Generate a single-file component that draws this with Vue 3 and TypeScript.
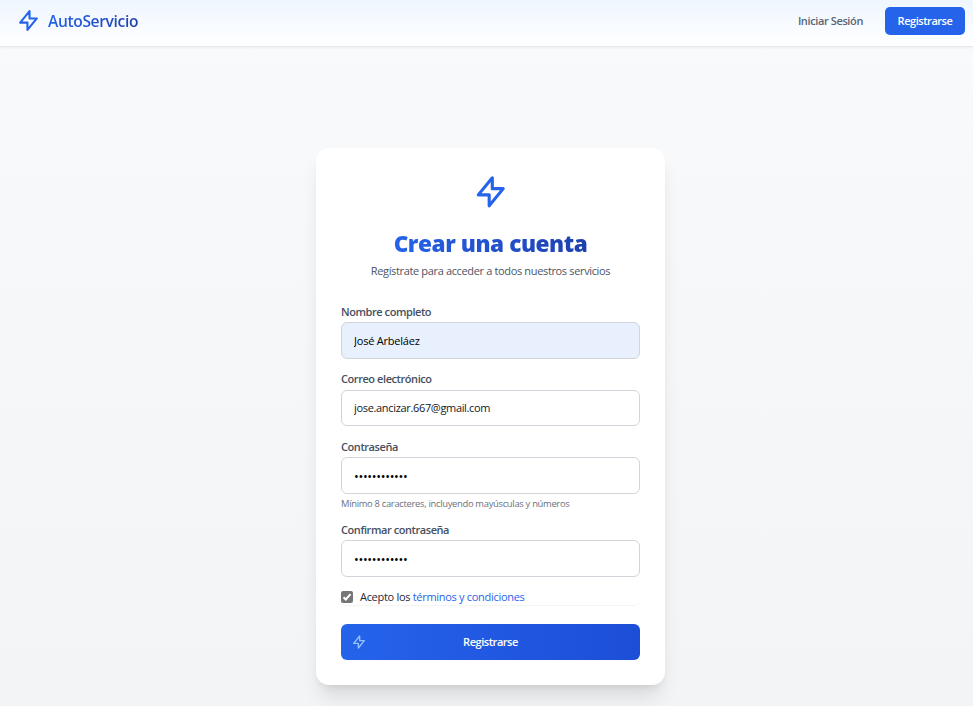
<script setup lang="ts">
import { ref } from 'vue'

const bolt = 'M13 10V3L4 14h7v7l9-11h-7z'
const nombre = ref('José Arbeláez')
const correo = ref('jose.ancizar.667@gmail.com')
const clave = ref('contrasena12')
const confirmacion = ref('contrasena12')
const acepta = ref(true)
</script>

<template>
  <div class="page">
    <header class="navbar">
      <a class="brand">
        <svg class="brand-icon" viewBox="0 0 24 24"><path :d="bolt" /></svg>
        <span class="brand-name">AutoServicio</span>
      </a>
      <nav class="nav-actions">
        <a class="login"><span>Iniciar Sesión</span></a>
        <a class="register"><span>Registrarse</span></a>
      </nav>
    </header>
    <main class="content">
      <section class="card">
        <svg class="card-icon" viewBox="0 0 24 24"><path :d="bolt" /></svg>
        <h2 class="title"><span>Crear una cuenta</span></h2>
        <p class="subtitle"><span>Regístrate para acceder a todos nuestros servicios</span></p>
        <form class="form" @submit.prevent>
          <div class="fields">
            <div class="field">
              <label for="nombre"><span>Nombre completo</span></label>
              <input id="nombre" v-model="nombre" class="filled" type="text" />
            </div>
            <div class="field">
              <label for="correo" class="raised"><span>Correo electrónico</span></label>
              <input id="correo" v-model="correo" class="mail" type="email" />
            </div>
            <div class="field">
              <label for="clave"><span>Contraseña</span></label>
              <input id="clave" v-model="clave" class="secret" type="password" />
              <p class="hint"><span>Mínimo 8 caracteres, incluyendo mayúsculas y números</span></p>
            </div>
            <div class="field last">
              <label for="confirmacion"><span>Confirmar contraseña</span></label>
              <input id="confirmacion" v-model="confirmacion" class="secret" type="password" />
            </div>
            <label class="terms">
              <input v-model="acepta" type="checkbox" />
              <svg class="check" viewBox="0 0 12 12"><path v-if="acepta" d="M2.5 6.2 4.8 8.5 9.5 3.1" /></svg>
              <span class="terms-text">Acepto los <a>términos y condiciones</a></span>
            </label>
          </div>
          <button class="submit" type="submit">
            <svg class="submit-icon" viewBox="0 0 24 24"><path :d="bolt" /></svg>
            <span>Registrarse</span>
          </button>
        </form>
      </section>
    </main>
  </div>
</template>

<style>
body {
  margin: 0;
  overflow: hidden;
}
</style>

<style scoped>
* {
  box-sizing: border-box;
}
.page {
  height: 706px;
  display: flex;
  flex-direction: column;
  overflow: hidden;
  background: linear-gradient(#f9fafb, #f3f4f6);
  font-family: "Segoe UI", "Open Sans", "Noto Sans", sans-serif;
  font-size: 11px;
  line-height: 16px;
  color: #374151;
}
svg {
  fill: none;
  stroke: #2563eb;
  stroke-width: 2;
  stroke-linecap: round;
  stroke-linejoin: round;
  flex: none;
}
span {
  white-space: nowrap;
}
.navbar {
  height: 47px;
  flex: none;
  display: flex;
  justify-content: space-between;
  padding: 7px 8px 0 16px;
  background: linear-gradient(#eff6ff, #fff);
  border-bottom: 1px solid #e5e7eb;
  box-shadow: 0 1px 2px rgba(0, 0, 0, 0.05);
}
.brand {
  display: flex;
  align-items: center;
  height: 27px;
  gap: 7px;
}
.brand-icon {
  width: 25px;
  height: 25px;
}
.brand-name {
  font-size: 15.6px;
  line-height: 22px;
  padding-top: 1px;
  font-weight: 600;
  letter-spacing: -0.37px;
  color: transparent;
  background: linear-gradient(90deg, #2563eb, #1e40af);
  background-clip: text;
}
.nav-actions {
  display: flex;
  align-items: center;
  height: 28px;
  gap: 22px;
}
.login {
  color: #5b6472;
  font-weight: 600;
  letter-spacing: -0.38px;
}
.register {
  width: 80px;
  height: 28px;
  display: flex;
  align-items: center;
  justify-content: center;
  border-radius: 5px;
  background: #2563eb;
  color: #fff;
  font-weight: 600;
  letter-spacing: -0.45px;
}
.content {
  padding: 101px 0 0 316px;
}
.card {
  width: 349px;
  height: 537px;
  padding: 25px;
  display: flex;
  flex-direction: column;
  align-items: center;
  background: #fff;
  border-radius: 13px;
  box-shadow: 0 16px 20px -4px rgba(0, 0, 0, 0.1), 0 6px 8px -5px rgba(0, 0, 0, 0.1);
}
.card-icon {
  width: 37.5px;
  height: 37.5px;
}
.title {
  margin: 19.5px 0 0;
  height: 28px;
  font-size: 22.6px;
  line-height: 28px;
  font-weight: 800;
  letter-spacing: -0.45px;
}
.title span {
  color: transparent;
  background: linear-gradient(90deg, #2563eb, #1e40af);
  background-clip: text;
}
.subtitle {
  margin: 5px 0 0;
  color: #4b5563;
  letter-spacing: -0.35px;
}
.form {
  width: 299px;
  margin-top: 25px;
}
.fields {
  height: 301px;
  border-radius: 5px;
  box-shadow: 0 1px 1px rgba(0, 0, 0, 0.05);
}
.field {
  height: 67.5px;
}
.field:nth-child(3) {
  height: 83px;
}
.field.last {
  height: 67px;
}
.field label {
  display: block;
  height: 18px;
  color: #465060;
  font-weight: 600;
  letter-spacing: -0.43px;
}
.field label.raised {
  line-height: 14.5px;
}
.field input {
  display: block;
  width: 299px;
  height: 36.5px;
  padding: 0 12px;
  border: 1px solid #d1d5db;
  border-radius: 6px;
  outline: none;
  background: #fff;
  color: #111827;
  font: inherit;
  letter-spacing: -0.33px;
}
.field input.filled {
  background: #e8f0fe;
  color: #000;
  letter-spacing: -0.22px;
}
.field input.secret {
  padding-top: 2px;
  font-size: 12.6px;
  letter-spacing: -0.28px;
  color: #000;
}
.hint {
  margin: 3px 0 0;
  font-size: 9.4px;
  line-height: 14px;
  color: #6b7280;
  letter-spacing: -0.3px;
}
.terms {
  display: flex;
  align-items: center;
  height: 16px;
  color: #1f2937;
}
.terms input {
  appearance: none;
  width: 0;
  height: 0;
  margin: 0;
}
.check {
  width: 12px;
  height: 12px;
  margin-right: 7px;
  border-radius: 2px;
  background: #767676;
  stroke: #fff;
  stroke-linecap: butt;
  stroke-linejoin: miter;
}
.terms-text {
  letter-spacing: -0.3px;
}
.terms a {
  color: #2563eb;
}
.submit {
  width: 299px;
  height: 36px;
  margin-top: 19px;
  padding: 0 35px 0 10px;
  display: grid;
  grid-template-columns: 16px 1fr;
  column-gap: 9px;
  align-items: center;
  border: 0;
  border-radius: 6px;
  background: linear-gradient(90deg, #2563eb, #1d4ed8);
  color: #fff;
  font: inherit;
  font-weight: 600;
  letter-spacing: -0.45px;
}
.submit-icon {
  width: 16px;
  height: 16px;
  stroke: #93c5fd;
}
</style>
